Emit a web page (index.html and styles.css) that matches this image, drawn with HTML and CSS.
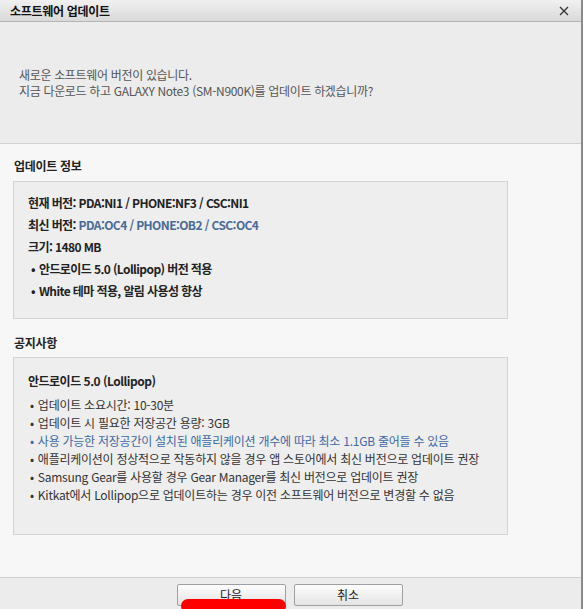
FILE: index.html
```html
<!DOCTYPE html>
<html lang="ko">
<head>
<meta charset="utf-8">
<title>소프트웨어 업데이트</title>
<link rel="stylesheet" href="styles.css">
</head>
<body>
<div class="dialog">
  <div class="titlebar">
    <span class="title">소프트웨어 업데이트</span>
    <span class="close">
      <svg width="10" height="10" viewBox="0 0 10 10"><path d="M1 1L9 9M9 1L1 9" stroke="#333" stroke-width="1.3"/></svg>
    </span>
  </div>
  <div class="header">
    <p>새로운 소프트웨어 버전이 있습니다.</p>
    <p>지금 다운로드 하고 GALAXY Note3 (SM-N900K)를 업데이트 하겠습니까?</p>
  </div>
  <div class="content">
    <h2 class="label">업데이트 정보</h2>
    <div class="box info">
      <p>현재 버전: PDA:NI1 / PHONE:NF3 / CSC:NI1</p>
      <p>최신 버전: <span class="blue">PDA:OC4 / PHONE:OB2 / CSC:OC4</span></p>
      <p>크기: 1480 MB</p>
      <p class="bullet">안드로이드 5.0 (Lollipop) 버전 적용</p>
      <p class="bullet">White 테마 적용, 알림 사용성 향상</p>
    </div>
    <h2 class="label second">공지사항</h2>
    <div class="box notice">
      <p class="ntitle">안드로이드 5.0 (Lollipop)</p>
      <ul>
        <li>업데이트 소요시간: 10-30분</li>
        <li>업데이트 시 필요한 저장공간 용량: 3GB</li>
        <li class="blue">사용 가능한 저장공간이 설치된 애플리케이션 개수에 따라 최소 1.1GB 줄어들 수 있음</li>
        <li>애플리케이션이 정상적으로 작동하지 않을 경우 앱 스토어에서 최신 버전으로 업데이트 권장</li>
        <li>Samsung Gear를 사용할 경우 Gear Manager를 최신 버전으로 업데이트 권장</li>
        <li>Kitkat에서 Lollipop으로 업데이트하는 경우 이전 소프트웨어 버전으로 변경할 수 없음</li>
      </ul>
    </div>
  </div>
  <div class="footer">
    <button class="btn primary">다음<span class="mark"></span></button>
    <button class="btn">취소</button>
  </div>
</div>
</body>
</html>
```
FILE: styles.css
```css
* { box-sizing: border-box; }
html, body { margin: 0; padding: 0; }
body {
  width: 583px;
  height: 609px;
  overflow: hidden;
  background: #f7f7f7;
  font-family: "Noto Sans CJK KR", "Noto Sans", sans-serif;
  font-size: 12px;
  color: #333;
}
p, h2, ul { margin: 0; padding: 0; }
.dialog {
  width: 583px;
  height: 609px;
  display: flex;
  flex-direction: column;
  border-right: 2px solid #8a8a8a;
  background: #f7f7f7;
}
.titlebar {
  height: 22px;
  flex: none;
  display: flex;
  align-items: center;
  justify-content: space-between;
  padding: 0 12px 0 10px;
  background: linear-gradient(#f1f1f1, #d9d9d9);
  border-bottom: 1px solid #b5b5b5;
}
.title {
  font-weight: bold;
  font-size: 12px;
  color: #111;
  line-height: 16px;
  letter-spacing: -0.3px;
}
.close { display: flex; }
.header {
  height: 122px;
  flex: none;
  display: flex;
  flex-direction: column;
  justify-content: center;
  padding-left: 19px;
  background: #ececec;
  border-bottom: 1px solid #d2d2d2;
  color: #555;
  line-height: 16px;
  letter-spacing: -0.33px;
}
.content {
  flex: 1;
  padding: 14px 13px 0 13px;
}
.label {
  font-size: 12px;
  font-weight: bold;
  color: #222;
  line-height: 16px;
  padding-left: 1px;
  margin-bottom: 7px;
  letter-spacing: -0.3px;
}
.label.second { margin-top: 16px; margin-bottom: 6px; }
.box {
  width: 495px;
  background: #eeeeee;
  border: 1px solid #d4d4d4;
}
.info {
  height: 138px;
  padding: 10px 0 0 14px;
  font-weight: bold;
  color: #222;
  line-height: 22px;
  letter-spacing: -0.6px;
}
.info .blue { color: #4a6a98; }
.bullet::before { content: "•"; margin: 0 4px 0 3px; }
.notice {
  height: 178px;
  padding: 14px 0 0 14px;
  line-height: 18px;
  letter-spacing: -0.25px;
}
.ntitle { font-weight: bold; color: #222; margin-bottom: 6px; letter-spacing: -0.5px; }
.notice ul { list-style: none; }
.notice li::before { content: "•"; margin: 0 4px 0 2px; }
.notice li.blue { color: #3d68a6; }
.footer {
  height: 32px;
  flex: none;
  display: flex;
  justify-content: center;
  gap: 8px;
  padding-top: 6px;
  padding-right: 2px;
  background: #ececec;
  border-top: 1px solid #cfcfcf;
}
.btn {
  position: relative;
  width: 109px;
  height: 22px;
  border: 1px solid #a0a0a0;
  border-radius: 2px;
  background: linear-gradient(#fdfdfd, #e3e3e3);
  font-family: inherit;
  font-size: 12px;
  color: #222;
  padding: 0;
  line-height: 18px;
}
.mark {
  position: absolute;
  left: 3px;
  top: 14px;
  width: 105px;
  height: 14px;
  background: #ff0000;
  border-radius: 7px;
}
```
